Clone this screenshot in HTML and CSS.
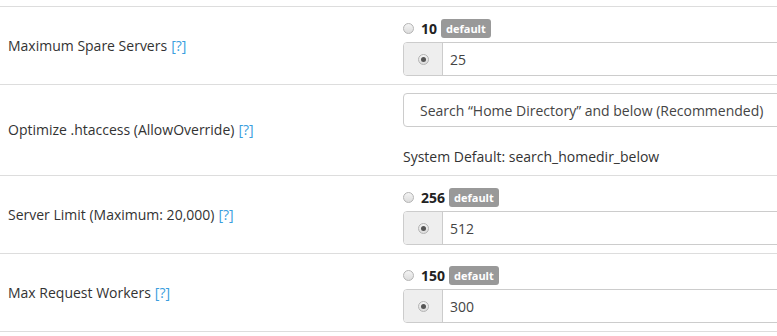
FILE: index.html
```html
<!DOCTYPE html>
<html lang="en">
<head>
    <meta charset="UTF-8">
    <title>Apache Configuration</title>
    <link rel="stylesheet" href="styles.css">
</head>
<body>
    <div class="frame">
    <div class="settings">
        <div class="row">
            <div class="label">Maximum Spare Servers <a href="#" class="help">[?]</a></div>
            <div class="value">
                <div class="choice">
                    <input type="radio" name="spare" class="radio">
                    <strong>10</strong>
                    <span class="badge">default</span>
                </div>
                <div class="input-group">
                    <span class="addon"><input type="radio" name="spare" class="radio" checked></span>
                    <input type="text" class="field" value="25">
                </div>
            </div>
        </div>

        <div class="row">
            <div class="label">Optimize .htaccess (AllowOverride) <a href="#" class="help">[?]</a></div>
            <div class="value">
                <select class="select">
                    <option>Search “Home Directory” and below (Recommended)</option>
                </select>
                <div class="note">System Default: search_homedir_below</div>
            </div>
        </div>

        <div class="row">
            <div class="label">Server Limit (Maximum: 20,000) <a href="#" class="help">[?]</a></div>
            <div class="value">
                <div class="choice">
                    <input type="radio" name="limit" class="radio">
                    <strong>256</strong>
                    <span class="badge">default</span>
                </div>
                <div class="input-group">
                    <span class="addon"><input type="radio" name="limit" class="radio" checked></span>
                    <input type="text" class="field" value="512">
                </div>
            </div>
        </div>

        <div class="row">
            <div class="label">Max Request Workers <a href="#" class="help">[?]</a></div>
            <div class="value">
                <div class="choice">
                    <input type="radio" name="workers" class="radio">
                    <strong>150</strong>
                    <span class="badge">default</span>
                </div>
                <div class="input-group">
                    <span class="addon"><input type="radio" name="workers" class="radio" checked></span>
                    <input type="text" class="field" value="300">
                </div>
            </div>
        </div>
    </div>
    </div>
</body>
</html>
```

FILE: styles.css
```css
body {
    margin: 0;
    font-family: "Open Sans", Arial, sans-serif;
    font-size: 14px;
    color: #333;
    background: #fff;
}

.frame {
    overflow: hidden;
}

.settings {
    width: 1100px;
    padding-top: 7px;
}

.row {
    display: grid;
    grid-template-columns: 395px 1fr;
    border-top: 1px solid #ddd;
    border-bottom: 1px solid #ddd;
    margin-top: -1px;
}

.label {
    display: flex;
    align-items: center;
    padding: 8px;
    line-height: 20px;
}

.help {
    color: #3a9ede;
    text-decoration: none;
    margin-left: 4px;
}

.value {
    padding: 8px;
}

.choice {
    display: flex;
    align-items: center;
    height: 19px;
    padding: 4px 0;
}

.choice strong {
    margin: 0 4px 0 7px;
    font-size: 14px;
    color: #222;
}

.badge {
    background: #999;
    color: #fff;
    font-size: 11px;
    font-weight: bold;
    line-height: 19px;
    padding: 0 5px;
    border-radius: 3px;
}

.radio {
    appearance: none;
    -webkit-appearance: none;
    width: 11px;
    height: 11px;
    margin: 0;
    border: 1px solid #b4b4b4;
    border-radius: 50%;
    background: linear-gradient(#f4f4f4, #dcdcdc);
    box-sizing: border-box;
    position: relative;
}

.radio:checked::after {
    content: "";
    position: absolute;
    left: 2px;
    top: 2px;
    width: 5px;
    height: 5px;
    border-radius: 50%;
    background: #555;
}

.input-group {
    display: flex;
    height: 34px;
    box-sizing: border-box;
    border: 1px solid #ccc;
    border-radius: 4px;
    overflow: hidden;
}

.addon {
    width: 38px;
    display: flex;
    align-items: center;
    justify-content: center;
    background: #eee;
    border-right: 1px solid #ccc;
}

.field {
    flex: 1;
    border: none;
    outline: none;
    padding: 0 7px;
    font-family: inherit;
    font-size: 14px;
    color: #444;
}

.select {
    appearance: none;
    -webkit-appearance: none;
    display: block;
    width: 100%;
    height: 34px;
    border: 1px solid #ccc;
    border-radius: 4px;
    background: #fff;
    padding: 0 16px;
    font-family: inherit;
    font-size: 14px;
    color: #444;
}

.note {
    margin-top: 20px;
    line-height: 20px;
}
```
